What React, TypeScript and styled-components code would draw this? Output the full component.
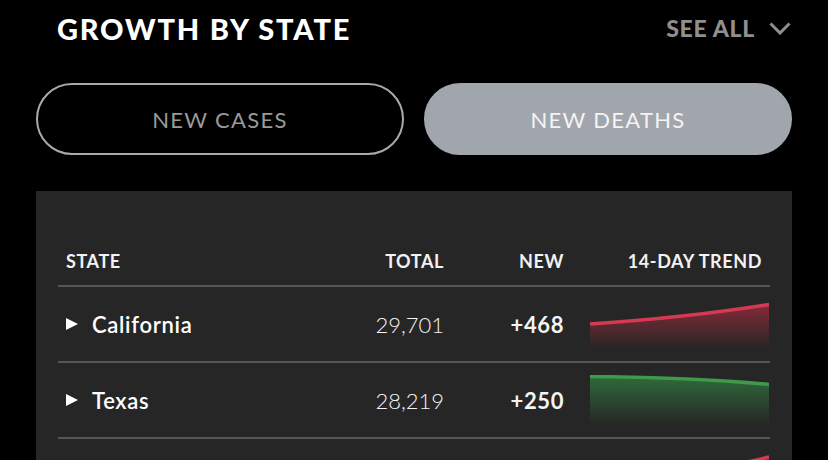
import styled, { createGlobalStyle } from "styled-components";

const GlobalStyle = createGlobalStyle`
  body {
    margin: 0;
    background: #000;
    font-family: Lato, "Open Sans", sans-serif;
    color: #fff;
  }
`;

const Page = styled.div`
  padding: 0 36px;
  height: 460px;
  overflow: hidden;
`;

const TitleBar = styled.div`
  height: 56px;
  display: flex;
  align-items: center;
  justify-content: space-between;
  padding: 0 1px 0 21px;
`;

const Title = styled.h2`
  margin: 0;
  font-size: 29px;
  font-weight: 900;
  letter-spacing: 1.8px;
  color: #fff;
`;

const SeeAll = styled.button`
  display: flex;
  align-items: center;
  gap: 14px;
  background: none;
  border: 0;
  padding: 0;
  font-family: inherit;
  font-size: 23px;
  font-weight: 900;
  letter-spacing: 0.7px;
  color: #8f8f8f;
  cursor: pointer;
`;

const Tabs = styled.div`
  display: grid;
  grid-template-columns: 1fr 1fr;
  gap: 20px;
  margin-top: 27px;
`;

const Tab = styled.button<{ $active?: boolean }>`
  height: 72px;
  border-radius: 36px;
  border: 2px solid ${(p) => (p.$active ? "#a1a5ac" : "#aaa")};
  background: ${(p) => (p.$active ? "#a1a5ac" : "transparent")};
  color: ${(p) => (p.$active ? "#f4f4f4" : "#9a9a9a")};
  font-family: inherit;
  font-size: 22px;
  font-weight: 400;
  letter-spacing: 1.3px;
  cursor: pointer;
`;

const Panel = styled.div`
  margin-top: 36px;
  background: #262626;
  padding: 46px 22px 0;
  min-height: 300px;
`;

const Row = styled.div<{ $head?: boolean }>`
  display: grid;
  grid-template-columns: 1fr 150px 120px 198px;
  height: ${(p) => (p.$head ? 50 : 76)}px;
  border-bottom: 2px solid #555;
  box-sizing: border-box;
  align-items: center;
`;

const HeadCell = styled.div<{ $right?: boolean }>`
  padding: 0 8px;
  font-size: 18px;
  font-weight: 700;
  letter-spacing: 0.6px;
  color: #f2f2f2;
  text-align: ${(p) => (p.$right ? "right" : "left")};
`;

const StateCell = styled.div`
  display: flex;
  align-items: center;
  gap: 14px;
  padding: 0 8px;
  font-size: 22px;
  font-weight: 600;
  letter-spacing: 0.7px;
`;

const Arrow = styled.span`
  width: 0;
  height: 0;
  border-top: 6.5px solid transparent;
  border-bottom: 6.5px solid transparent;
  border-left: 12px solid #fff;
`;

const NumCell = styled.div<{ $bold?: boolean }>`
  padding: 0 8px;
  text-align: right;
  font-size: 22px;
  font-weight: ${(p) => (p.$bold ? 700 : 300)};
  letter-spacing: ${(p) => (p.$bold ? 0.6 : 0)}px;
  color: #f4f4f4;
`;

const TrendCell = styled.div`
  padding: 0 1px 0 18px;
  height: 50px;
`;

type State = {
  name?: string;
  total?: string;
  change?: string;
  color: "red" | "green";
  line: string;
};

// third row only peeks in at the bottom edge, its labels sit below the fold
const states: State[] = [
  { name: "California", total: "29,701", change: "+468", color: "red", line: "M0,25 C60,21 120,15 179,5.5" },
  { name: "Texas", total: "28,219", change: "+250", color: "green", line: "M0,1.5 C60,2 120,4 179,9.5" },
  { color: "red", line: "M0,30 C80,26 130,18 179,6" },
];

const palette = {
  red: { stroke: "#d63a52", fill: "#8a2a3a" },
  green: { stroke: "#3f9a4c", fill: "#2f6e3b" },
};

const Trend = ({ line, color, id }: { line: string; color: "red" | "green"; id: string }) => {
  const c = palette[color];
  return (
    <svg width="179" height="50" viewBox="0 0 179 50">
      <defs>
        <linearGradient id={id} x1="0" y1="0" x2="0" y2="1">
          <stop offset="0" stopColor={c.fill} stopOpacity="0.95" />
          <stop offset="1" stopColor={c.fill} stopOpacity="0" />
        </linearGradient>
      </defs>
      <path d={`${line} L179,50 L0,50 Z`} fill={`url(#${id})`} />
      <path d={line} fill="none" stroke={c.stroke} strokeWidth="3.5" />
    </svg>
  );
};

export default function App() {
  return (
    <Page>
      <GlobalStyle />
      <TitleBar>
        <Title>GROWTH BY STATE</Title>
        <SeeAll>
          SEE ALL
          <svg width="22" height="13" viewBox="0 0 22 13">
            <path d="M1.5,1.5 L11,11 L20.5,1.5" fill="none" stroke="#8f8f8f" strokeWidth="3" />
          </svg>
        </SeeAll>
      </TitleBar>
      <Tabs>
        <Tab>NEW CASES</Tab>
        <Tab $active>NEW DEATHS</Tab>
      </Tabs>
      <Panel>
        <Row $head>
          <HeadCell>STATE</HeadCell>
          <HeadCell $right>TOTAL</HeadCell>
          <HeadCell $right>NEW</HeadCell>
          <HeadCell $right>14-DAY TREND</HeadCell>
        </Row>
        {states.map((s, i) => (
          <Row key={i}>
            <StateCell>
              {s.name && <Arrow />}
              {s.name}
            </StateCell>
            <NumCell>{s.total}</NumCell>
            <NumCell $bold>{s.change}</NumCell>
            <TrendCell>
              <Trend line={s.line} color={s.color} id={`trend-${i}`} />
            </TrendCell>
          </Row>
        ))}
      </Panel>
    </Page>
  );
}
